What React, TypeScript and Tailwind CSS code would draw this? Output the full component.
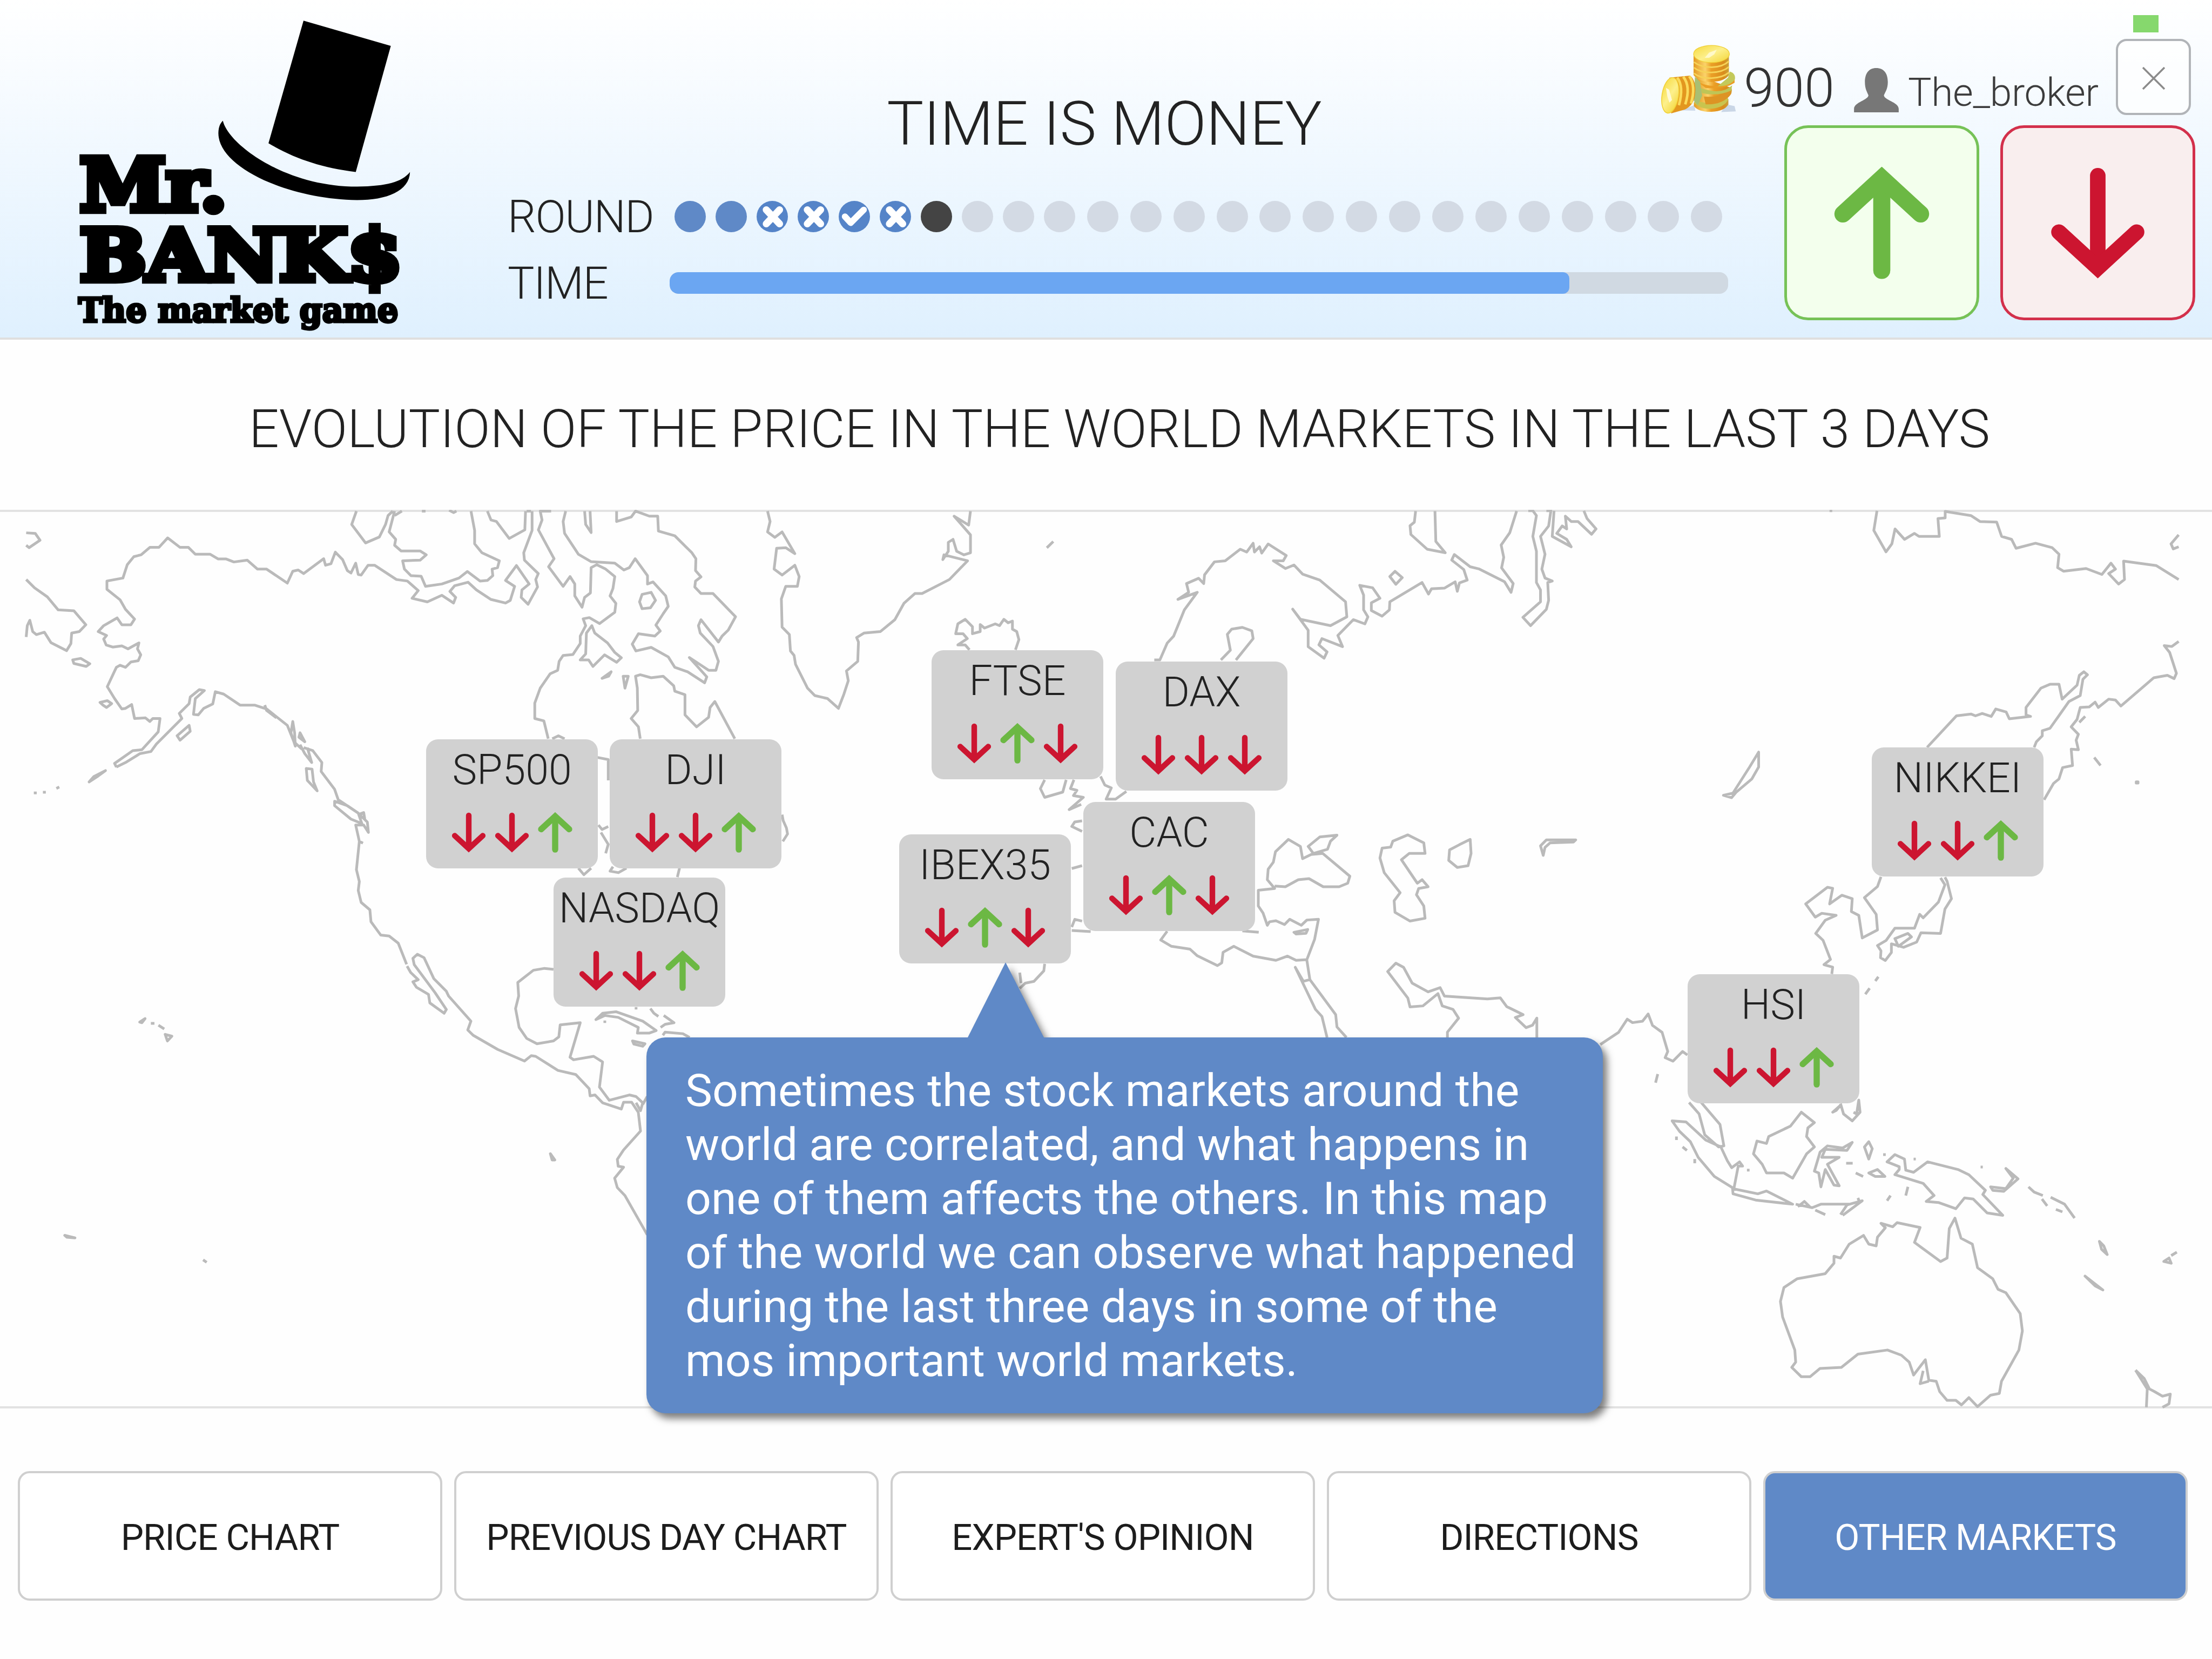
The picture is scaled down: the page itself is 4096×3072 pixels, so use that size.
import React from "react";

type Dir = "up" | "down";

/* Coastlines, one sheet per region; each sheet carries its own scale. */
const COASTS: { transform: string; d: string }[] = [
  {
    transform: "translate(0 960) scale(0.70153 0.57398)",
    d: `M320,905 L315,893 L365,850 L390,847 L435,787 L440,742 L420,742 L412,752 L400,740 L370,742 L362,695 L345,708 L335,710 L315,675 L295,635 L320,570 L330,563 L345,570 L360,552 L380,548 L387,528 L378,508 L382,488 L352,508 L335,498 L310,502 L292,495 L285,475 L293,463 L270,450 L285,430 L322,404 L335,427 L360,427 L370,408 L345,375 L330,343 L294,308 L294,280 L338,270 L350,225 L368,198 L388,192 L412,167 L437,167 L461,135 L495,167 L518,167 L537,190 L578,190 L600,206 L622,206 L643,216 L680,210 L708,240 L733,240 L790,287 L805,247 L820,243 L835,255 L890,205 L895,227 L910,222 L922,183 L942,208 L955,245 L965,253 L978,220 L985,258 L993,260 L1012,227 L1030,227 L1090,275 L1120,280 L1150,312 L1133,338 L1175,350 L1215,328 L1247,354 L1253,335 L1237,315 L1250,296 L1287,284 L1310,310 L1350,342 L1390,354 L1403,345 L1415,298 L1390,278 L1420,228 L1455,290 L1435,310 L1433,335 L1452,358 L1478,300 L1473,275 L1480,255 L1442,210 L1440,185 L1463,110 L1463,45
    M1085,45 L1070,115 L1088,140 L1085,160 L1103,179 L1155,179 L1172,192 L1155,210 L1107,212 L1112,240 L1130,262 L1158,264 L1170,298 L1215,290 L1262,270 L1285,248 L1320,280 L1340,278 L1355,262 L1353,240 L1368,235 L1373,212 L1325,185 L1305,155 L1305,110 L1295,45
    M980,45 L967,90 L1005,152 L1043,132 L1060,90 L1067,60 L1080,45 M1340,45 L1350,75 L1365,80 L1400,137 L1443,108 L1445,45 M1085,60 L1105,45 M1160,45 h10 M1235,42 l12,8 l8,-5
    M72,275 L95,303 L130,333 L160,377 L203,380 L236,427 L218,450 L197,455 L195,490 L183,514 L140,487 L122,452 L100,460 L90,450 L82,412 L75,430 L72,468
    M72,118 L97,120 L110,143 L80,168 L72,160 M200,545 L222,540 L247,558 L237,567 L203,557Z M275,688 L295,682 L307,692 L293,705 L283,697Z
    M320,905 L345,890 L385,860 L415,853 L430,828 L500,742 L493,725 L520,692 L523,670 L548,645 L562,648 L537,675 L532,728 L545,730 L560,708 L585,693 L592,652 L615,660 L660,697 L700,697 L733,710 L790,765 L808,820 L830,845 M728,697 L733,715 L760,740 M835,840 L860,850 L885,890 L883,920 L920,980 L930,1015 L985,1060 L1010,1090 L1013,1125 L1000,1100 L978,1100 L988,1155 L980,1250 L988,1290 L985,1320 L993,1360 L1017,1385 L1020,1425 L1047,1470 L1070,1473 L1095,1497 L1118,1568
    M487,800 L520,765 L523,785 L495,815Z M805,752 L810,790 L812,835 L800,790Z M825,790 L838,820 L822,805Z M845,840 L857,890 L838,860 L825,830 M842,910 L858,912 L862,955 L872,985 L845,950Z M920,1020 L955,1035 L985,1060 L995,1095 L965,1080 L920,1035Z M985,1065 L1000,1058 L1003,1080 M988,1155 l10,6
    M245,955 L258,937 L290,917 L270,935Z M93,992h8 M118,990h8 M155,977l8,-5 M1460,45 L1448,45`,
  },
  {
    transform: "translate(800 960) scale(0.70153 0.57398)",
    d: `M375,45 L345,45 L350,75 L340,108 L383,205 L368,232 L408,298 L427,265 L440,290 L440,330 L460,368 L467,335 L483,320 L485,235 L500,225 L525,240 L550,265 L545,305 L537,330 L553,355 L550,385 L508,423 L480,403 L463,407 L470,430 L455,465 L455,490 L435,527 L408,530 L397,550 L393,580 L372,592 L345,640 L330,690 L330,742 L355,750 L367,810
    M415,45 L408,80 L412,120 L450,190 L485,215 L550,220 L575,243 L590,235 L606,205 L640,262 L640,290 L655,283 L690,330 L697,365 L683,390 L663,428 L675,448 L660,465 L615,457 L598,492 L608,515 L650,503 L697,535 L715,570 L750,585 L797,622 L803,602 L755,537 L808,580 L828,580 L835,550 L820,500 L785,455 L780,430 L787,410 L835,485 L845,465 L862,445 L882,400 L820,322 L787,322 L770,300 L772,280 L787,266 L772,245 L773,205 L762,185 L715,128 L670,112 L668,62 L645,62 L607,45 L595,65 L555,80 L555,45
    M467,45 L470,90 L485,117 L482,45 M625,325 L650,318 L662,345 L648,370 L625,373 L618,350Z M487,430 L495,455 L530,488 L550,520 L568,538 L555,553 L522,528 L490,567 L478,545 L455,545 L470,525 L472,455Z M515,607 L540,585 L533,600Z M573,600 L587,600 L578,640Z
    M620,810 L615,770 L595,742 L613,715 L612,640 L607,600 L620,595 L650,605 L683,600 L712,632 L715,650 L743,662 L743,730 L775,770 L808,738 L812,705 L825,685 L880,810 M378,810 L395,800 L412,810
    M970,45 L977,80 L970,115 L990,133 L1010,115 L1045,188 L1020,168 L995,170 L988,240 L1010,260 L1045,227 L1057,265 L1052,298 L1020,298 L1008,340 L1010,435 L1030,460 L1033,515 L1043,530 L1047,560 L1080,640 L1100,665 L1135,675 L1165,708 L1180,660 L1192,615 L1187,582 L1218,550 L1220,485 L1215,470 L1235,455 L1280,450 L1320,410 L1345,355 L1375,322 L1395,322 L1470,275 L1520,212 L1455,192 L1452,208 L1467,180 L1467,150 L1480,140 L1490,180 L1510,192 L1528,185 L1528,125 L1483,62 L1523,92 L1528,45
    M503,873 L532,880 L532,950 M505,1100 L515,1115 L532,1105 M512,1125 L532,1165 L525,1195 M450,1245 L465,1267 L485,1245 M545,1240 L537,1255 L560,1260 L582,1245 M728,1245 L722,1275 M1010,1065 L1013,1085 L1022,1110 L1025,1130 L1012,1155`,
  },
  {
    transform: "translate(0 1800) scale(0.86097 0.60587)",
    d: `M912,105 L920,125 L937,148 L925,155 L933,172 L960,195 L963,222 L995,255 L1000,243 L975,190 L928,100 L925,80 L935,67 L950,78 L972,145 L1000,185 L1005,200 L1055,280 L1048,308 L1060,325 L1115,370 L1175,407 L1190,390 L1200,392 L1250,437 L1290,450 L1320,495 L1322,518 L1333,515 L1350,540 L1392,560 L1397,538 L1415,538 L1430,570 L1435,630 L1397,690 L1383,720 L1385,742 L1397,745 L1377,780 L1383,810 L1400,835 L1450,960
    M1240,115 L1220,112 L1195,118 L1160,157 L1162,200 L1155,240 L1163,300 L1180,335 L1203,352 L1240,343 L1252,330 L1255,292 L1300,285 L1277,395 L1285,403 L1330,392 L1350,410 L1343,490 L1365,532 L1410,515 L1425,520 L1440,540 L1435,565 L1425,540 M1440,545 L1450,520
    M1335,275 L1350,255 L1380,250 L1440,280 L1470,310 L1455,318 L1428,318 L1430,300 L1385,268 L1355,262Z M1485,325 L1490,315 L1530,320 L1545,332 M1417,343 L1445,352 L1440,360 L1420,353Z M1457,240 l8,15 l10,10 M1487,262 L1510,285 L1490,290 L1480,300 M1425,235v8 M1355,278v8
    M313,283 L325,272 L318,285Z M338,287h8 M355,293 L368,305 M370,322 L385,328 L375,343Z M1233,702 L1243,722 L1237,722Z M145,962 L168,970 L150,968Z M455,1040 L463,1048`,
  },
  {
    transform: "translate(1700 960) scale(0.82908 0.67602)",
    d: `M385,143 L400,125 M205,434 L195,420 L178,420 L200,402 L190,388 L173,388 L178,360 L195,347 L212,368 L212,388 L230,382 L230,362 L240,372 L265,360 L275,365 L285,347 L295,357 L305,352 L305,375 L315,382 L320,405 L312,434
    M635,463 L648,463 L665,415 L680,395 L705,320 L735,270 L690,290 L715,270 L710,245 L738,230 L750,245 L752,220 L775,183 L800,180 L835,147 L850,155 L865,130 L868,155 L880,140 L885,158 L900,132 L942,165 L935,180 L912,180 L940,202 L960,192 L980,218 L1020,235 L1080,297 L1083,340 L1045,365 L975,347 L957,318 L993,378 L993,425 L1030,458 L1037,440 L1018,420 L1025,402 L1073,425 L1062,393 L1098,348 L1125,360 L1132,340 L1122,320 L1122,278 L1113,250 L1143,257 L1160,287 L1140,300 L1140,322 L1165,338 L1182,320 L1183,297 L1258,242 L1273,275 L1280,260 L1310,258 L1335,240 L1340,267 L1345,243 L1363,235 L1355,205 L1327,178 L1333,162 L1370,197 L1390,203 L1450,240 L1465,270 L1470,245 L1443,200 L1448,170 L1442,135 L1462,100 L1478,38
    M1243,38 L1240,70 L1230,80 L1232,105 L1270,147 L1312,157 L1290,125 L1288,38 M1195,210 L1212,228 L1197,247 L1183,225Z
    M790,463 L812,435 L805,390 L815,375 L840,370 L862,380 L865,402 L825,463
    M380,805 L370,830 L380,855 L422,840 L430,805 M448,805 L440,830 L455,835 L447,850 L470,855 L437,890 L465,875 M510,795 L520,820 L535,828 L523,860 L545,860 L570,838 M467,922 L450,925 L443,938 L467,952 M443,1058 L467,1050 M443,1225 L450,1203 L467,1208 M443,1235 L487,1238
    M665,1237 L650,1262 L675,1280 L718,1288 L735,1307 L782,1335 L792,1327 L795,1297 L820,1280 L865,1308 L918,1320 L945,1308 L965,1320 L990,1318 L1008,1260 L1017,1203 L990,1205 L977,1220 L950,1203 L938,1218 L918,1207 L903,1210 L898,1220 L888,1185 L877,1165 L877,1120 L915,1115 L898,1090 L900,1060 L912,1040 L917,1010 L947,975 L975,995 L980,1030 L1000,1018 L1027,1015 L1090,1080 L1085,1100 L1065,1110 L1028,1110 L995,1087 L970,1090 L940,1110 L915,1108
    M993,995 L1020,968 L1060,963 L1045,980 L1038,1003 L1005,1015Z
    M1265,1015 L1262,985 L1225,962 L1190,980 L1185,997 L1165,1000 L1160,1028 L1170,1070 L1207,1127 L1193,1150 L1195,1183 L1230,1208 L1265,1200 L1262,1165 L1245,1133 L1250,1115 L1272,1110 L1258,1090 L1247,1100 L1210,1033 L1228,1015Z
    M1370,975 L1372,1015 L1365,1050 L1340,1055 L1320,1035 L1322,1005 L1345,990Z M960,1240 L992,1232 L988,1243 L965,1245Z M840,1236 L878,1240
    M990,1320 L997,1375 L982,1380 L963,1340 L1010,1460 L1025,1480 L1037,1540 M997,1375 L1057,1475 L1060,1510 L1082,1540
    M1525,1540 L1525,1485 L1515,1505 L1500,1512 L1475,1483 L1493,1475 L1455,1452 L1440,1427 L1410,1430 L1310,1422 L1300,1398 L1272,1410 L1235,1385 L1215,1340 L1197,1328 L1178,1352 L1225,1428 L1230,1453 L1260,1450 L1295,1415 L1305,1450 L1330,1460 L1343,1485 L1317,1525 L1317,1540
    M380,1330 L378,1350 L355,1380 L335,1385 L322,1400 M322,1355 L325,1385`,
  },
  {
    transform: "translate(2900 960) scale(0.87117 0.57398)",
    d: `M55,44 L65,44 L73,60 L65,130 L73,180 L73,285 L82,310 L82,350 L43,402 L60,430 L95,375 L100,345 L98,285 L108,280 L92,270 L85,240 L92,190 L82,130 L100,95 L105,44 L95,44
    M112,44 L108,130 L150,165 L140,140 L118,120 L130,95 L140,105 L137,62 L150,80 L165,80 L195,123 L205,105 L185,70 L178,44
    M88,1202 L82,1170 L95,1150 L160,1150 L155,1157 L103,1160 L92,1175Z M565,855 L565,905 L550,945 L515,990 L505,1008 L487,1000 L508,993 L545,905Z M722,44h6
    M827,44 L820,110 L847,182 L860,155 L867,105 L888,140 L910,120 L920,130 L965,130 L962,70 L978,68 L978,46 L1035,60 L1055,80 L1092,82 L1103,130 L1125,140 L1135,170 L1178,153 L1215,168 L1230,190 L1227,235 L1240,247 L1290,238 L1325,258 L1345,220 L1355,240 L1340,255 L1362,290 L1375,275 L1373,213 L1445,228 L1495,275 M1495,125 L1478,155 L1483,172 L1495,165
    M1495,483 L1480,500 L1463,497 L1475,520 L1490,590 L1485,608 L1470,597 L1440,605 L1367,700 L1355,680 L1340,677 L1317,705 L1310,687 L1297,703 L1277,705 L1270,745 L1257,770 L1273,795 L1268,815 L1273,847 L1257,845 L1260,900 L1238,907 L1230,945 L1218,960 L1197,1015
    M1175,839 L1180,820 L1193,800 L1193,783 L1210,775 L1252,685 L1277,665 L1283,610 L1293,595 L1285,585 L1275,597 L1270,630 L1237,677 L1230,627 L1210,627 L1190,640 L1157,705 L1157,730 L1167,735 L1120,743 L1113,720 L1090,710 L1080,735 L1060,725 L1045,733 L1035,727 L1003,733 L938,839
    M1308,873 L1322,900 M1401,955h4v4h-4z M1275,755 L1288,735`,
  },
  {
    transform: "translate(2950 1700) scale(0.83929 0.66964)",
    d: `M808,-13 L800,15 L770,47 L797,95 L800,140 L765,163 L757,98 L740,87 L742,50 L718,40 L690,65 L697,20 L685,17 L635,65 L657,103 L672,92 L705,98 L680,112 L658,150 L675,170 L692,225 L677,240 L697,247 L695,267
    M945,-10 L955,10 L940,60 L905,105 L897,95 L885,135 L840,135 L820,170 L800,185 L808,200 L807,220 L818,228 L832,205 L832,180 L860,190 L890,175 L900,148 L945,150 L955,80 L970,50 L960,0 L955,-12 M840,165 L870,150 L878,160 L848,187Z M772,325 L782,308 M795,287 L802,275
    M163,470 L205,435 L225,397 L237,407 L260,403 L273,382 L283,415 L305,435 L318,490 L312,508 L330,518 L352,490 L363,500 M290,580 L295,555
    M367,637 L390,670 L403,730 L435,765 L447,762 L438,700 L395,637
    M328,690 L345,720 L370,750 L388,795 L425,850 L470,885 L480,820 L490,820 L483,808 L465,825 L455,805 L440,765 L405,745 L360,693Z
    M467,885 L525,900 L545,892 L605,930 L520,918 L468,900Z M612,930 L650,940 L670,930 L735,930 M617,937 L632,922 L645,938 M657,947 L680,960 M715,960 L730,932 L765,920 L720,962 M755,912 l5,15
    M625,665 L655,695 L640,710 L637,735 L655,765 L637,785 L605,855 L585,840 L545,840 L535,815 L515,785 L523,748 L545,755 L550,735 L600,705Z
    M742,752 L730,775 L680,772 L672,795 L712,795 L685,815 L712,877 L700,875 L680,830 L670,880 L665,840 L655,835 L668,780 L685,762 L720,768Z
    M780,750 L788,770 L780,800 L770,765Z M780,840 L800,830 L817,850 L795,850Z M750,840 L767,850 M728,812h15 M697,665 L715,645 L705,660Z M715,640 L722,670 L742,690 L760,665 L757,630 L752,670 L745,665
    M850,830 L840,845 L905,870 L930,905 L912,922 L940,925 L980,943 L1000,912 L1020,915 L1052,955 L1088,962 L1042,902 L1048,890 L1010,845 L985,830 L915,808 L883,838 L865,832 L862,800 L840,787 L822,808 L850,822Z
    M1060,880 L1095,885 L1112,855 L1095,827 L1123,857 L1090,893 L1065,890Z M1147,880 L1160,895 L1180,905 M1178,915 L1190,935 M1198,910 L1230,930 L1253,970 M1210,945 L1225,952
    M1037,823h5 M883,800h5 M813,787h6 M500,832h6 M380,800v12 M352,765 L362,775 M338,735v10 M865,905 L870,880 M822,920 L830,905
    M978,970 L992,1028 L1018,1045 L1030,1113 L1065,1145 L1077,1175 L1095,1185 L1128,1245 L1133,1295 L1125,1350 L1085,1440 L1080,1475 L1060,1480 L1030,1513 L1010,1487 L993,1508 L980,1495 L960,1495 L943,1470 L935,1440 L918,1437 L910,1378 L883,1422 L873,1385 L855,1365 L823,1350 L755,1362 L717,1400 L668,1403 L645,1427 L625,1427 L603,1400 L612,1385 L610,1350 L582,1255 L577,1210 L585,1170 L615,1145 L680,1130 L700,1100 L700,1080 L715,1085 L735,1045 L768,1020 L780,1045 L797,1050 L800,1025 L818,998 L808,985 L835,995 L845,983 L898,997 L885,1040 L945,1095 L960,1085 L965,1000Z
    M905,1410 L898,1447 L918,1440 M1393,1408 L1413,1432 L1425,1462 L1437,1470 L1455,1483 L1473,1477 L1470,1505 L1455,1515 M1393,1408 L1420,1462 L1418,1515 M1277,1137 L1318,1177 L1300,1165Z M1458,1095 L1470,1085 L1475,1100Z M1475,1078 L1488,1068 M1310,1037 L1320,1050 L1328,1075 L1315,1060Z`,
  },
];

function WorldMap() {
  return (
    <svg className="absolute inset-0 h-full w-full" viewBox="0 983.33 4266.67 1733.33" preserveAspectRatio="none" fill="none">
      {COASTS.map((c) => (
        <g key={c.transform} transform={c.transform}>
          <path d={c.d} stroke="#bababa" strokeWidth="5" strokeLinejoin="round" className="[vector-effect:non-scaling-stroke]" />
        </g>
      ))}
    </svg>
  );
}

function Arrow({ dir, className }: { dir: Dir; className: string }) {
  const up = dir === "up";
  return (
    <svg className={className} viewBox="0 0 184 217" fill="none">
      <g
        transform={up ? undefined : "rotate(180 92 108.5)"}
        stroke={up ? "#6cb844" : "#cc1530"}
        strokeWidth={up ? 33 : 30}
        strokeLinecap="round"
      >
        <path d="M92 200V30" />
        <path d="M17 91L92 22L167 91" strokeLinejoin="miter" />
      </g>
    </svg>
  );
}

function Logo() {
  return (
    <svg className="h-[626px] w-[940px] shrink-0" viewBox="0 0 979.17 652">
      <g transform="scale(0.63776 0.43367)">
        <path d="M918,92 L1182,204 L1076,765 C970,745 890,705 812,637 Z" />
        <path d="M674,537 C690,640 860,830 1080,830 C1170,828 1215,810 1240,765 C1238,850 1170,890 1080,890 C860,885 640,730 662,570 Q665,550 674,537Z" />
      </g>
      <g
        fontFamily="'DejaVu Serif', serif"
        fontWeight="700"
        stroke="#000"
        strokeLinejoin="miter"
      >
        <text x="154" y="406" fontSize="141" strokeWidth="13" textLength="284" lengthAdjust="spacingAndGlyphs">Mr.</text>
        <text x="154" y="541" fontSize="137" strokeWidth="13" textLength="622" lengthAdjust="spacingAndGlyphs">BANK$</text>
        <text x="151" y="621" fontSize="65" strokeWidth="5" textLength="617" lengthAdjust="spacingAndGlyphs">The market game</text>
      </g>
    </svg>
  );
}

function Coins() {
  return (
    <svg className="mt-[67px] ml-[3px] h-[163px] w-[166px] shrink-0" viewBox="0 0 520 510">
      <defs>
        <linearGradient id="side" x1="0" x2="1" y1="0" y2="0">
          <stop offset="0" stopColor="#e39a22" />
          <stop offset="0.33" stopColor="#fbd26a" />
          <stop offset="0.5" stopColor="#eb9f26" />
          <stop offset="0.85" stopColor="#d98c1c" />
          <stop offset="1" stopColor="#c9a23a" />
        </linearGradient>
        <linearGradient id="face" x1="0" x2="1" y1="0" y2="1">
          <stop offset="0" stopColor="#f6d93c" />
          <stop offset="0.5" stopColor="#fdf08c" />
          <stop offset="1" stopColor="#f3d433" />
        </linearGradient>
      </defs>
      <path d="M420 440L505 436L498 405L450 395Z" fill="#c9d6e6" />
      <path d="M180 430L270 432L265 400Z" fill="#ccd9ea" />
      <path d="M262 385V405Q290 440 365 438Q440 435 462 395V365Z" fill="url(#side)" />
      <path d="M262 385Q300 425 365 420Q440 415 462 365L450 345L270 370Z" fill="#c9c44e" />
      <path d="M275 225L480 300Q490 330 460 355Q380 410 285 375Z" fill="url(#side)" />
      <path d="M320 350Q420 360 478 300V335Q430 400 330 395Z" fill="#dd9424" />
      <path d="M300 300Q420 345 484 285L478 315Q400 350 310 330Z" fill="#bfc556" />
      <path d="M285 265Q400 320 498 245V270Q440 310 330 300Z" fill="#ea9d25" />
      <path d="M470 205Q505 215 500 250Q470 290 400 290L460 240Z" fill="#c3c95a" />
      <path d="M260 100V225Q290 265 365 265Q440 262 465 225V100Z" fill="url(#side)" />
      <path d="M262 150Q300 180 365 180Q430 178 465 145M262 182Q300 212 365 210Q430 208 465 178M262 215Q300 246 365 243Q430 240 465 210" fill="none" stroke="#f6d257" strokeWidth="9" />
      <ellipse cx="364" cy="103" rx="104" ry="50" fill="url(#face)" stroke="#f0cf35" strokeWidth="4" />
      <path d="M325 125L350 95L395 78L380 105L350 125Z" fill="#fff9c9" />
      <path d="M268 235L298 265L310 345L285 400L262 375Z" fill="#a9bf72" />
      <path d="M120 240L240 228Q280 260 268 345Q260 400 210 425L130 448Z" fill="#e3971f" />
      <path d="M165 240Q205 290 175 400M200 235Q245 290 212 395M235 232Q275 290 245 390" fill="none" stroke="#fbdb5a" strokeWidth="15" />
      <ellipse cx="125" cy="343" rx="48" ry="104" transform="rotate(9 125 343)" fill="url(#face)" stroke="#f2d136" strokeWidth="5" />
      <path d="M100 300L118 310L135 370L120 385L108 350Z" fill="#fffad6" />
    </svg>
  );
}

type Round = "done" | "wrong" | "right" | "current" | "pending";
const ROUNDS: Round[] = ["done", "done", "wrong", "wrong", "right", "wrong", "current", ...Array<Round>(18).fill("pending")];
const DOT_COLOR: Record<Round, string> = {
  done: "bg-[#5f89c7]",
  wrong: "bg-[#5584c8]",
  right: "bg-[#5584c8]",
  current: "bg-[#444444]",
  pending: "bg-[#d3dae4]",
};

function RoundDot({ state, wide }: { state: Round; wide: boolean }) {
  return (
    <div className={`h-[58px] w-[58px] shrink-0 rounded-full ${wide ? "mr-[21.9px]" : "mr-[18px]"} ${DOT_COLOR[state]}`}>
      {state === "wrong" && (
        <svg viewBox="0 0 60 60" className="h-full w-full" stroke="#fff" strokeWidth="13.5" strokeLinecap="round">
          <path d="M18.5 17L44 44M44 17L18.5 44" />
        </svg>
      )}
      {state === "right" && (
        <svg viewBox="0 0 60 60" className="h-full w-full" stroke="#fff" strokeWidth="12" strokeLinecap="round" strokeLinejoin="round" fill="none">
          <path d="M12 30L23 42L48 17" />
        </svg>
      )}
    </div>
  );
}

function Header() {
  return (
    <header className="flex h-[629px] shrink-0 border-b-4 border-[#dfdfdf] bg-linear-to-b from-white to-[#dff0fe]">
      <Logo />
      <div className="flex flex-col">
        <div className="flex h-[232px] items-start">
          <h1 className="mt-[172px] w-[2110px] pl-[100px] text-center text-[114px] leading-none font-light text-[#222]">TIME IS MONEY</h1>
          <div className="flex items-start">
            <Coins />
            <span className="mt-[112px] ml-[10px] w-[200px] text-[101px] leading-none font-light text-[#333]">900</span>
            <svg className="mt-[126px] ml-[4px] h-[82px] w-[83px] shrink-0" viewBox="0 0 115 114" fill="#777">
              <path d="M57 0C77 0 87 14 87 36C87 54 80 62 77 70C76 82 115 88 115 105V114H0V105C0 88 38 82 37 70C34 62 28 54 28 36C28 14 38 0 57 0Z" />
            </svg>
            <span className="mt-[135px] ml-[17px] w-[385px] text-[73px] leading-none font-light tracking-[-0.3px] whitespace-nowrap text-[#3c3c3c]">The_broker</span>
            <div className="flex flex-col">
              <div className="mt-[28px] ml-[32px] h-[32px] w-[47px] bg-[#86d86d]" />
              <button className="mt-[12px] flex h-[141px] w-[139px] items-center justify-center rounded-[20px] border-4 border-[#b1b4b8] bg-white/70">
                <svg className="mt-[5px] h-[42px] w-[42px]" viewBox="0 0 42 42" stroke="#8b8b8b" strokeWidth="3.5">
                  <path d="M1 1L41 41M41 1L1 41" />
                </svg>
              </button>
            </div>
          </div>
        </div>
        <div className="flex">
          <div className="flex w-[2364px] flex-col gap-[63px] pt-[139px]">
            <div className="flex h-[60px] items-center">
              <span className="w-[309px] text-[83px] leading-none font-light tracking-[-1.3px] text-[#222]">ROUND</span>
              {ROUNDS.map((r, i) => (
                <RoundDot key={i} state={r} wide={i >= 9} />
              ))}
            </div>
            <div className="flex h-[60px] items-center">
              <span className="w-[300px] text-[83px] leading-none font-light tracking-[-1.3px] text-[#222]">TIME</span>
              <div className="h-[40px] w-[1960px] overflow-hidden rounded-[16px] bg-[#d0d9e2]">
                <div className="h-full w-[85%] rounded-l-[16px] rounded-r-[12px] bg-[#6ba6f2]" />
              </div>
            </div>
          </div>
          <button className="flex h-[361px] w-[361px] items-center justify-center rounded-[44px] border-[5px] border-[#76c257] bg-[#f3ffed]">
            <Arrow dir="up" className="h-[208px] w-[177px]" />
          </button>
          <button className="ml-[39px] flex h-[361px] w-[361px] items-center justify-center rounded-[44px] border-[5px] border-[#d3304b] bg-[#f9eeee]">
            <Arrow dir="down" className="h-[208px] w-[177px]" />
          </button>
        </div>
      </div>
    </header>
  );
}

const MARKETS: { name: string; days: Dir[]; pos: string }[] = [
  { name: "SP500", days: ["down", "down", "up"], pos: "left-[789px] top-[425px]" },
  { name: "DJI", days: ["down", "down", "up"], pos: "left-[1129px] top-[425px]" },
  { name: "NASDAQ", days: ["down", "down", "up"], pos: "left-[1025px] top-[681px]" },
  { name: "FTSE", days: ["down", "up", "down"], pos: "left-[1725px] top-[260px]" },
  { name: "DAX", days: ["down", "down", "down"], pos: "left-[2066px] top-[281px]" },
  { name: "CAC", days: ["down", "up", "down"], pos: "left-[2006px] top-[541px]" },
  { name: "IBEX35", days: ["down", "up", "down"], pos: "left-[1665px] top-[601px]" },
  { name: "NIKKEI", days: ["down", "down", "up"], pos: "left-[3466px] top-[440px]" },
  { name: "HSI", days: ["down", "down", "up"], pos: "left-[3125px] top-[860px]" },
];

function MarketCard({ name, days, pos }: { name: string; days: Dir[]; pos: string }) {
  return (
    <div className={`absolute flex h-[239px] w-[318px] flex-col items-center rounded-[22px] bg-[#d1d1d1] ${pos}`}>
      <span className="mt-[19px] h-[78px] text-[77px] leading-none font-light whitespace-nowrap text-[#222]">{name}</span>
      <div className="mt-[38px] flex gap-[16px]">
        {days.map((d, i) => (
          <Arrow key={i} dir={d} className="h-[75px] w-[64px]" />
        ))}
      </div>
    </div>
  );
}

const CALLOUT = [
  "Sometimes the stock markets around the",
  "world are correlated, and what happens in",
  "one of them affects the others. In this map",
  "of the world we can observe what happened",
  "during the last three days in some of the",
  "mos important world markets.",
];

function Callout() {
  return (
    <div className="absolute top-[838px] left-[1197px] drop-shadow-[8px_10px_7px_rgba(0,0,0,0.5)]">
      <svg className="ml-[595px] block h-[139px] w-[141px]" viewBox="0 0 141 139" fill="#5f89c7">
        <path d="M70 0L141 139H0Z" />
      </svg>
      <div className="flex h-[696px] w-[1771px] flex-col rounded-[35px] bg-[#5f89c7] pt-[49px] pl-[72px]">
        {CALLOUT.map((line) => (
          <p key={line} className="text-[84px] leading-[100px] tracking-[0.2px] whitespace-nowrap text-white">
            {line}
          </p>
        ))}
      </div>
    </div>
  );
}

const TABS = ["PRICE CHART", "PREVIOUS DAY CHART", "EXPERT'S OPINION", "DIRECTIONS", "OTHER MARKETS"];

export default function App() {
  return (
    <div className="flex h-[3072px] w-[4096px] flex-col overflow-hidden bg-[#fefefe] font-['Roboto',sans-serif]">
      <Header />
      <h2 className="h-[315px] shrink-0 pt-[117px] pl-[50px] text-center text-[98px] leading-none font-light whitespace-nowrap text-[#222]">
        EVOLUTION OF THE PRICE IN THE WORLD MARKETS IN THE LAST 3 DAYS
      </h2>
      <section className="relative z-10 h-[1664px] shrink-0 border-y-4 border-[#e2e2e2]">
        <div className="absolute -inset-y-1 inset-x-0">
          <WorldMap />
          {MARKETS.map((m) => (
            <MarketCard key={m.name} {...m} />
          ))}
          <Callout />
        </div>
      </section>
      <nav className="mt-[116px] flex gap-[22px] px-[33px]">
        {TABS.map((t) => (
          <button
            key={t}
            className={`flex h-[240px] w-[786px] shrink-0 items-center justify-center rounded-[22px] border-4 border-[#cfcfcf] pt-[6px] text-[67px] tracking-[-0.9px] whitespace-nowrap ${
              t === "OTHER MARKETS" ? "bg-[#5f89c7] text-white" : "bg-white text-[#1c1c1c]"
            }`}
          >
            {t}
          </button>
        ))}
      </nav>
    </div>
  );
}
